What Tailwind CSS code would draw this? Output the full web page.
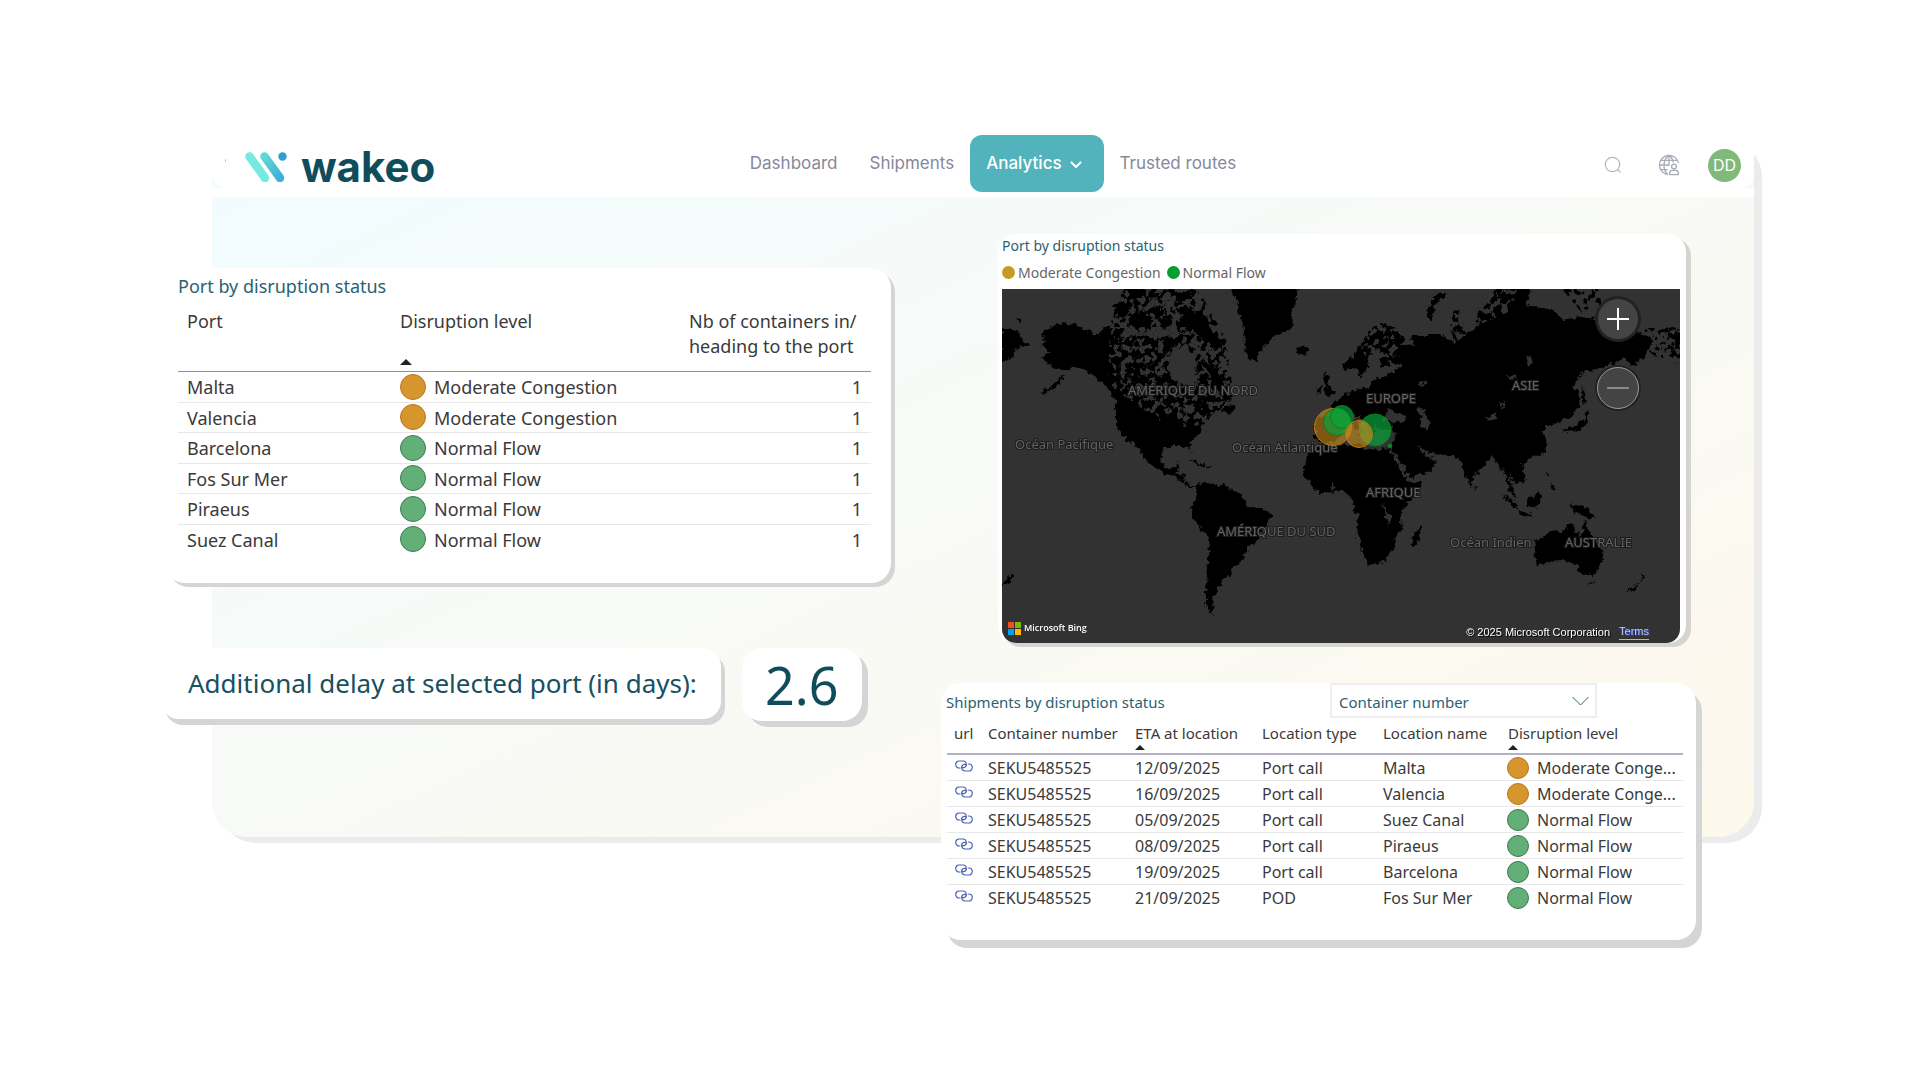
<!DOCTYPE html>
<html lang="en">
<head>
    <meta charset="UTF-8">
    <meta name="viewport" content="width=device-width, initial-scale=1.0">
    <title>Wakeo - Analytics</title>
    <script src="https://cdn.jsdelivr.net/npm/@tailwindcss/browser@4"></script>
</head>
<body class="min-h-screen bg-white pt-[135px] pr-[166px] pb-[132px] pl-[212px] font-['Noto_Sans','Open_Sans',sans-serif] text-[#3a3a3a]">
    <div class="rounded-[36px] bg-linear-to-br from-[#f1fcff] via-[#f8faf6] to-[#fef8ec] shadow-[8px_6px_0_#ececec]">

        <!-- Top bar -->
        <header class="rounded-tr-[20px] border-b-9 border-white">
            <div class="relative grid h-[53px] grid-cols-[1fr_auto_1fr] items-center rounded-tr-[20px] rounded-b-[14px] bg-white font-['Inter',sans-serif]">
                <span class="absolute top-[24px] left-[13px] h-[3px] w-px bg-[#8fe3cf]"></span>
                <a href="#" aria-label="wakeo" class="flex items-center gap-[14px] pt-[6px] pl-[33px] text-[#0f4c5c]">
                    <svg class="h-[30px] w-[42px]" viewBox="0 0 42 30" fill="none">
                        <defs>
                            <linearGradient id="bar" x1="18" y1="8" x2="36" y2="24" gradientUnits="userSpaceOnUse">
                                <stop stop-color="#5fd6d8"/>
                                <stop offset="1" stop-color="#41aed6"/>
                            </linearGradient>
                        </defs>
                        <path d="M4.500 4.500 20 26" stroke="#74eae0" stroke-width="8.500" stroke-linecap="round"/>
                        <path d="M19.500 4.500 35 26" stroke="url(#bar)" stroke-width="8.500" stroke-linecap="round"/>
                        <circle cx="37.500" cy="4.500" r="4.200" fill="#2c9fd3"/>
                    </svg>
                    <span class="text-[42px] leading-[50px] font-bold">wakeo</span>
                </a>
                <nav class="ml-5 flex h-[57px] items-center self-start text-[17px] text-[#85889a]">
                    <a href="#" class="px-4">Dashboard</a>
                    <a href="#" class="px-4">Shipments</a>
                    <button class="flex h-[57px] items-center gap-2 rounded-[12px] bg-[#52b3bd] pr-[22px] pl-4 font-medium text-white">
                        Analytics
                        <svg class="h-3 w-3" viewBox="0 0 12 12" fill="none" stroke="currentColor" stroke-width="2" stroke-linecap="round" stroke-linejoin="round"><path d="M1.500 4.500 6 9l4.500-4.500"/></svg>
                    </button>
                    <a href="#" class="px-4">Trusted routes</a>
                </nav>
                <div class="flex items-center justify-end pt-[3px] pr-[13px]">
                    <button aria-label="Search" class="mr-[36px] text-[#b3b4c0]">
                        <svg class="h-[18px] w-[18px]" viewBox="0 0 18 18" fill="none" stroke="currentColor" stroke-width="1.200" stroke-linecap="round"><circle cx="8.500" cy="8.500" r="7.200"/><path d="m13.600 13.600 2.600 2.600"/></svg>
                    </button>
                    <button aria-label="Language" class="mr-[28px] text-[#a9abb9]">
                        <svg class="h-[22px] w-[22px]" viewBox="0 0 22 22" fill="none" stroke="currentColor" stroke-width="1.300">
                            <path d="M10 20.500A9.600 9.600 0 1 1 20.500 9M10 20.500C4.500 16 4.500 6 11 1.400 14 3.500 15 6 15.300 8.500M11 1.400V12M1.400 11H11M2.800 6.400h16.400M2.800 15.600H9.500"/>
                            <circle cx="16" cy="12.600" r="2.400"/>
                            <path d="M11.700 20.600v-1.500q0-2.700 2.700-2.700h3.200q2.700 0 2.700 2.700v1.500z"/>
                        </svg>
                    </button>
                    <button class="h-[33px] w-[33px] rounded-full bg-[#80b97a] text-[16px] leading-[33px] text-white">DD</button>
                </div>
            </div>
        </header>

        <main class="grid grid-cols-[679fr_755fr] items-start gap-[50px] pr-[58px]">
            <!-- Left column -->
            <div class="-ml-[47px]">
                <section class="mt-[71px] h-[315px] rounded-[20px] bg-white pt-[4px] pr-[20px] pl-[13px] shadow-[4px_4px_0_#d5d5d5]">
                    <h2 class="text-[18px] leading-[28px] text-[#2a6272]">Port by disruption status</h2>
                    <table class="mt-[4px] w-full table-fixed text-left text-[18px]">
                        <colgroup><col class="w-[213px]"><col><col class="w-[191px]"></colgroup>
                        <thead>
                            <tr class="h-[67px] border-b border-[#8e8ea0] align-top leading-[25px]">
                                <th class="pt-[5px] pl-[9px] font-normal">Port</th>
                                <th class="pt-[5px] pl-[9px] font-normal">Disruption level
                                    <svg class="mt-[25px] h-[6px] w-[12px]" viewBox="0 0 12 6"><path d="M6 0l6 6H0z" fill="#222"/></svg>
                                </th>
                                <th class="pt-[5px] pl-[9px] font-normal whitespace-nowrap">Nb of containers in/<br>heading to the port</th>
                            </tr>
                        </thead>
                        <tbody id="ports"></tbody>
                    </table>
                </section>

                <div class="mt-[65px] flex items-start gap-[21px]">
                    <p class="-ml-[4px] h-[71px] rounded-[18px] bg-white pr-[24px] pl-[27px] text-[26px] leading-[71px] whitespace-nowrap text-[#17505f] shadow-[4px_6px_0_#d5d5d5]">Additional delay at selected port (in days):</p>
                    <p class="h-[73px] w-[120px] rounded-[20px] bg-white text-center text-[52px] leading-[73px] text-[#0f4c5c] shadow-[6px_6px_0_#d5d5d5]">2.6</p>
                </div>
            </div>

            <!-- Right column -->
            <div>
                <section class="mt-[37px] mr-[10px] ml-[57px] overflow-hidden rounded-[18px] bg-white pr-[6px] pl-[4px] shadow-[5px_4px_0_#d5d4d0]">
                    <h2 class="pt-[2px] text-[14px] leading-[20px] text-[#2a6272]">Port by disruption status</h2>
                    <ul class="mb-px flex h-[32px] items-center gap-[6px] text-[14px] text-[#666]">
                        <li class="flex items-center gap-[3px]"><span class="h-[13px] w-[13px] rounded-full bg-[#c59a25]"></span>Moderate Congestion</li>
                        <li class="flex items-center gap-[3px]"><span class="h-[13px] w-[13px] rounded-full bg-[#049f2e]"></span>Normal Flow</li>
                    </ul>
                    <div class="relative h-[354px] overflow-hidden rounded-b-[14px] bg-[#323232]">
                        <svg class="h-full w-full" viewBox="0 0 678 354" preserveAspectRatio="xMidYMid slice">
                            <defs>
                                <filter id="coast" x="-5%" y="-5%" width="110%" height="110%">
                                    <feTurbulence type="fractalNoise" baseFrequency="0.200" numOctaves="3" seed="4"/>
                                    <feDisplacementMap in="SourceGraphic" scale="8" xChannelSelector="R" yChannelSelector="G"/>
                                </filter>
                                <!-- keeps only scattered specks of the shape it is put on -->
                                <filter id="specks" x="0" y="0" width="100%" height="100%">
                                    <feTurbulence type="fractalNoise" baseFrequency="0.160" numOctaves="3" seed="9"/>
                                    <feColorMatrix values="0 0 0 0 0  0 0 0 0 0  0 0 0 0 0  14 0 0 0 -7.400"/>
                                    <feComposite in="SourceGraphic" operator="in"/>
                                </filter>
                            </defs>
                            <g filter="url(#coast)">
                            <g transform="translate(-12 -69) scale(.33333)">
                                <!-- Americas and Greenland -->
                                <path d="M155 345 200 310 260 315 320 345 350 320 400 325 390 355 450 345 500 355 560 345 610 345 600 370 560 385 540 410 530 440 545 480 590 495 602 530 618 500 620 430 640 420 670 440 690 470 712 500 722 530 700 560 660 590 640 610 625 645 600 670 605 700 598 680 560 677 520 685 512 715 525 745 545 745 568 728 565 750 555 760 585 765 588 785 610 800 640 788 700 795 750 820 765 850 780 862 820 865 845 885 835 910 815 925 810 955 775 980 765 1010 745 1035 725 1040 725 1065 700 1075 695 1090 680 1100 685 1115 670 1130 665 1175 680 1192 655 1175 648 1150 648 1100 655 1000 660 950 635 930 615 895 603 870 615 835 625 808 600 803 560 775 520 758 480 735 470 720 440 680 410 660 385 632 378 610 378 550 360 510 330 480 290 450 250 440 225 450 200 450 170 430 155 410 180 395 150 380 170 365z"/>
                                <path d="M715 190H925L920 240 905 270 910 310 890 335 850 350 825 380 805 400 800 430 775 415 765 370 760 310 745 280 740 240z"/>
                                <path d="M372 255l25-12 25 22-12 28-30 2zM415 285l40-12 28 20 4 38-40 6-30-20zM395 207l60-2 20 24-40 5zM490 262l20-8 10 30-20 12zM540 218l60-6 10 24-50 8zM555 265l36-8 22 24 18-12 22 24 6 34 22 22 18 36-24 8-26-28-34-26-26-8-26-22 12-22zM505 300l30-6 14 22-30 14zM560 310l22 4 6 22-24 2zM480 215l30 5-8 16-20-4zM690 575l30-22 20 4-16 24zM918 385l22-9 17 4-3 18-28 10zM36 325l44 8 22 32 20 10-44 10-8 26-34 14zM36 1095l22-26 8-8 6 6-18 24zM80 295l10 0 2 8-14 2zM595 720l25 4 22 12-6 4zM645 737l20 2-4 6-16-2z"/>
                                <path d="M150 520l30-18 25-24 20-14-18 26-40 30z"/>
                            </g>
                            <!-- Europe, Africa, Asia -->
                            <g transform="translate(198 -4) scale(.33333)">
                                <path d="M345 405 362 392 420 398 400 375 395 360 430 330 465 315 500 310 515 288 580 262 602 240 592 205 600 185 640 180 630 160 660 150 720 150 765 175 755 140 760 85 780 75 785 130 800 150 840 105 830 80 870 50 890 0 1000 0 975 60 1060 75 1090 105 1140 95 1210 105 1290 135 1320 145 1360 165 1340 205 1300 245 1270 220 1250 230 1190 255 1150 260 1120 300 1140 325 1135 365 1110 395 1070 415 1040 425 1025 437 1040 470 1035 500 1000 515 965 535 975 585 945 600 925 560 935 600 950 640 930 620 915 570 895 540 875 510 850 545 820 575 812 605 800 580 785 530 760 515 715 510 680 500 655 480 665 500 690 520 712 530 690 560 630 580 600 530 575 490 590 440 530 432 530 412 560 408 615 412 620 395 590 385 565 372 550 405 520 420 530 440 510 450 490 405 460 390 490 440 480 450 445 400 430 420 420 460 370 475 345 460z"/>
                                <path d="M430 235 460 215 480 180 510 140 545 112 590 130 612 165 602 180 604 235 540 245 545 205 530 190 505 215 500 255 480 280 470 250 440 255z"/>
                                <path d="M325 500 360 480 480 478 500 495 570 490 595 540 625 590 665 590 650 630 610 670 600 700 608 735 585 755 582 790 545 835 505 842 490 800 470 750 475 700 455 650 450 630 430 620 360 625 330 595 312 575 318 530z"/>
                                <path d="M632 765l28-42 4 8-12 50-14 4zM372 265l18 4-5 30 22 28-28 6-4-34zM350 312l14-8 2 20-14 4zM680 95l16-52 48-32 14 2-34 26-24 40-4 24zM824 600l6 12-6 4zM1145 305l10 30 2 30-10-10zM1080 438l50-14 24-24 6-22 6 4-6 36-36 24z"/>
                            </g>
                            <!-- South-east Asia and Oceania -->
                            <g transform="translate(338 141) scale(.33333)">
                                <path d="M583 335 640 300 665 310 690 280 705 285 700 305 725 315 735 268 750 310 790 370 780 405 765 432 725 432 710 405 690 395 660 390 620 395 590 408zM747 455h14l-6 14zM905 428l12 10-12 16zM897 455l-18 34-16-4zM690 222l52 12 24 32-36-6-30-16zM558 210l42-28 2 22-12 32-26-8zM486 188l34 26 26 36-32-24zM540 246l36 6-2 6-34-4zM618 118l8 20-6 2zM632 155l10 22-8 4zM978-290h44v58l-22-14 6-22zM700-215l30 4 30 24-10 8z"/>
                            </g>
                            </g>
                            <!-- Arctic islands and broken coasts -->
                            <path filter="url(#specks)" d="M120 0h76l28 50 8 60-20 12-24-54-30-22-54 0 10-26zM560 0h36l4 16-20 8zM620 40l58-2v38l-24-8zM134 112l54-2 40-14-6 20-60 18z"/>
                            <!-- Inland waters -->
                            <path filter="url(#specks)" fill="#323232" d="M108 38h86l-14 26-16 12-4 22 18 22-20 12-20-14-32-22z"/>
                            <path filter="url(#specks)" fill="#323232" d="M168 90l18-22 18 10 22 40-40 24-10-10zM354 52l20-20 22 8 4 38-26 6zM425 0h90l-6 22-70 30z"/>
                            <g fill="#323232" filter="url(#coast)">
                                <path d="M168 60l6-2 2 5-6 3zM142 66l8 3-2 6-7-2zM152 82l10-3 3 5-9 4zM130 56l7 2-2 4zM180 118l8-3 6 4-4 6-8-3zM160 92l7 3-3 7zM414 120l9-1-1 6 7 8-2 9-8-4-1-9zM387 139l5-2-2 10-6 2zM386 157l3 1 16 29-3 2zM452 45l3-4 8 6-7 4zM484 128l10-4 2 5-8 4zM524 67l4-2 3 8-4 4zM417 95l8-4 1 3-8 4zM506 85l10 3-7 4zM384 223l6 5-3 5-5-4zM380 212l5 12 3 14-4-8zM329 198l3-4 2 6-4 2zM213 187l8 4-6 1zM499 112l3 6-3 2zM110 25l6 6-5 3zM136 38l10 2-7 5z"/>
                            </g>
                            <g fill="#626262" stroke="#1c1c1c" stroke-width="2" paint-order="stroke" font-family="Noto Sans" font-size="13">
                                <text x="126" y="106">AMÉRIQUE DU NORD</text>
                                <text x="364" y="114">EUROPE</text>
                                <text x="510" y="101">ASIE</text>
                                <text x="13" y="160">Océan Pacifique</text>
                                <text x="230" y="163">Océan Atlantique</text>
                                <text x="364" y="208">AFRIQUE</text>
                                <text x="215" y="247">AMÉRIQUE DU SUD</text>
                                <text x="448" y="258">Océan Indien</text>
                                <text x="563" y="258">AUSTRALIE</text>
                            </g>
                            <g fill="#d18f1d" fill-opacity=".6" stroke="#b97a12">
                                <circle cx="331" cy="138" r="18.500"/>
                            </g>
                            <g fill="#0aa33a" fill-opacity=".7" stroke="#05801f">
                                <circle cx="335" cy="133" r="13.500"/>
                                <circle cx="340" cy="128" r="11.500"/>
                                <circle cx="373" cy="141" r="16"/>
                                <circle cx="388" cy="157" r="1.800"/>
                            </g>
                            <circle cx="357" cy="145" r="13.500" fill="#d18f1d" fill-opacity=".6" stroke="#b97a12"/>
                        </svg>
                        <button aria-label="Zoom in" class="absolute top-[10px] right-[42px] flex h-[40px] w-[40px] items-center justify-center rounded-full bg-[#444] shadow-[0_0_0_3px_#222]">
                            <svg class="h-[22px] w-[22px]" viewBox="0 0 22 22" stroke="#fff" stroke-width="2"><path d="M11 0v22M0 11h22"/></svg>
                        </button>
                        <button aria-label="Zoom out" class="absolute top-[78px] right-[41px] flex h-[42px] w-[42px] items-center justify-center rounded-full border border-[#999] bg-[#444] shadow-[0_0_0_2px_#222]">
                            <svg class="h-[22px] w-[22px]" viewBox="0 0 22 22" stroke="#8a8a8a" stroke-width="2"><path d="M0 11h22"/></svg>
                        </button>
                        <div class="absolute bottom-[7px] left-[6px] flex items-center gap-[3px] font-['Open_Sans',sans-serif] text-[9px] leading-[16px] font-semibold text-white">
                            <svg class="h-[13px] w-[13px]" viewBox="0 0 13 13"><path d="M0 0h6v6H0z" fill="#f25022"/><path d="M7 0h6v6H7z" fill="#7fba00"/><path d="M0 7h6v6H0z" fill="#00a4ef"/><path d="M7 7h6v6H7z" fill="#ffb900"/></svg>
                            Microsoft Bing
                        </div>
                        <div class="absolute right-[31px] bottom-[3px] flex gap-[9px] font-['Liberation_Sans',sans-serif] text-[11px] leading-[16px] text-white [text-shadow:1px_1px_0_#000]">
                            <span>© 2025 Microsoft Corporation</span>
                            <a href="#" class="border-b border-[#aab4d8] leading-[14px] text-[#c3cdf5] [text-shadow:1px_1px_0_#2a4ac0]">Terms</a>
                        </div>
                    </div>
                </section>

                <section class="mt-[40px] -mb-[103px] h-[257px] rounded-[20px] bg-white pr-[13px] pl-[6px] shadow-[6px_8px_0_#d5d5d5]">
                    <div class="flex h-[35px] items-center justify-between pr-[86px]">
                        <h2 class="-ml-px pt-[3px] text-[15px] text-[#2a6272]">Shipments by disruption status</h2>
                        <div class="relative text-[#2a6272]">
                            <select aria-label="Filter column" class="h-[35px] w-[267px] appearance-none border-2 border-[#eeeeee] bg-white pt-[3px] pl-[7px] text-[15px]">
                                <option>Container number</option>
                            </select>
                            <svg class="pointer-events-none absolute top-[13px] right-[8px] h-[10px] w-[17px]" viewBox="0 0 17 10" fill="none" stroke="currentColor"><path d="M.500 1 8.500 9l8-8"/></svg>
                        </div>
                    </div>
                    <table class="w-full table-fixed text-left text-[16px] whitespace-nowrap">
                        <colgroup><col class="w-[34px]"><col class="w-[147px]"><col class="w-[127px]"><col class="w-[121px]"><col class="w-[119px]"><col></colgroup>
                        <thead>
                            <tr class="h-[36px] border-b-2 border-[#b4b1c2] align-top text-[15px] leading-[20px]">
                                <th class="pt-[5px] pl-[7px] font-normal">url</th>
                                <th class="pt-[5px] pl-[7px] font-normal">Container number</th>
                                <th class="pt-[5px] pl-[7px] font-normal">ETA at location
                                    <svg class="mt-[2px] h-[5px] w-[10px]" viewBox="0 0 10 5"><path d="M5 0l5 5H0z" fill="#222"/></svg>
                                </th>
                                <th class="pt-[5px] pl-[7px] font-normal">Location type</th>
                                <th class="pt-[5px] pl-[7px] font-normal">Location name</th>
                                <th class="pt-[5px] pl-[13px] font-normal">Disruption level
                                    <svg class="mt-[2px] h-[5px] w-[10px]" viewBox="0 0 10 5"><path d="M5 0l5 5H0z" fill="#222"/></svg>
                                </th>
                            </tr>
                        </thead>
                        <tbody id="shipments"></tbody>
                    </table>
                </section>
            </div>
        </main>
    </div>

    <script>
        const orange = 'bg-[#d6952d] border-[#b5781c]';
        const green = 'bg-[#63af78] border-[#3c7a50]';

        const ports = [
            ['Malta', 'Moderate Congestion', orange],
            ['Valencia', 'Moderate Congestion', orange],
            ['Barcelona', 'Normal Flow', green],
            ['Fos Sur Mer', 'Normal Flow', green],
            ['Piraeus', 'Normal Flow', green],
            ['Suez Canal', 'Normal Flow', green],
        ];

        document.getElementById('ports').innerHTML = ports.map(([port, level, colour]) => `
            <tr class="h-[30px] border-b border-[#e8e8e8] leading-[27px] last:border-b-0 odd:h-[31px]">
                <td class="pt-[2px] pl-[9px]">${port}</td>
                <td class="pl-[9px]"><div class="flex items-center gap-[8px]"><span class="h-[26px] w-[26px] rounded-full border ${colour}"></span><span class="pt-[2px]">${level}</span></div></td>
                <td class="pt-[2px] pr-[9px] text-right">1</td>
            </tr>`).join('');

        const shipments = [
            ['12/09/2025', 'Port call', 'Malta', 'Moderate Conge...', orange],
            ['16/09/2025', 'Port call', 'Valencia', 'Moderate Conge...', orange],
            ['05/09/2025', 'Port call', 'Suez Canal', 'Normal Flow', green],
            ['08/09/2025', 'Port call', 'Piraeus', 'Normal Flow', green],
            ['19/09/2025', 'Port call', 'Barcelona', 'Normal Flow', green],
            ['21/09/2025', 'POD', 'Fos Sur Mer', 'Normal Flow', green],
        ];

        document.getElementById('shipments').innerHTML = shipments.map(([eta, type, name, level, colour]) => `
            <tr class="h-[26px] border-b border-[#e8e8e8] leading-[23px] last:border-b-0">
                <td class="pl-[8px]">
                    <a href="#" aria-label="Open shipment">
                        <svg class="mb-[6px] inline h-[12px] w-[18px]" viewBox="0 0 18 12" fill="none" stroke="#4a66b5" stroke-width="1.200" stroke-linecap="round"><path d="M5 8H4.200A3.500 3.500 0 0 1 4.200 1H8a3.500 3.500 0 0 1 1.600 6.500Q7.400 8.300 6.600 6.400M13.300 4h.5a3.500 3.500 0 0 1 0 7H10A3.500 3.500 0 0 1 8.400 4.500Q10.600 3.700 11.400 5.600"/></svg>
                    </a>
                </td>
                <td class="pt-[2px] pl-[7px]">SEKU5485525</td>
                <td class="pt-[2px] pl-[7px]">${eta}</td>
                <td class="pt-[2px] pl-[7px]">${type}</td>
                <td class="pt-[2px] pl-[7px]">${name}</td>
                <td class="pl-[12px]"><div class="flex items-center gap-[8px]"><span class="h-[22px] w-[22px] rounded-full border ${colour}"></span><span class="pt-[2px]">${level}</span></div></td>
            </tr>`).join('');
    </script>
</body>
</html>
